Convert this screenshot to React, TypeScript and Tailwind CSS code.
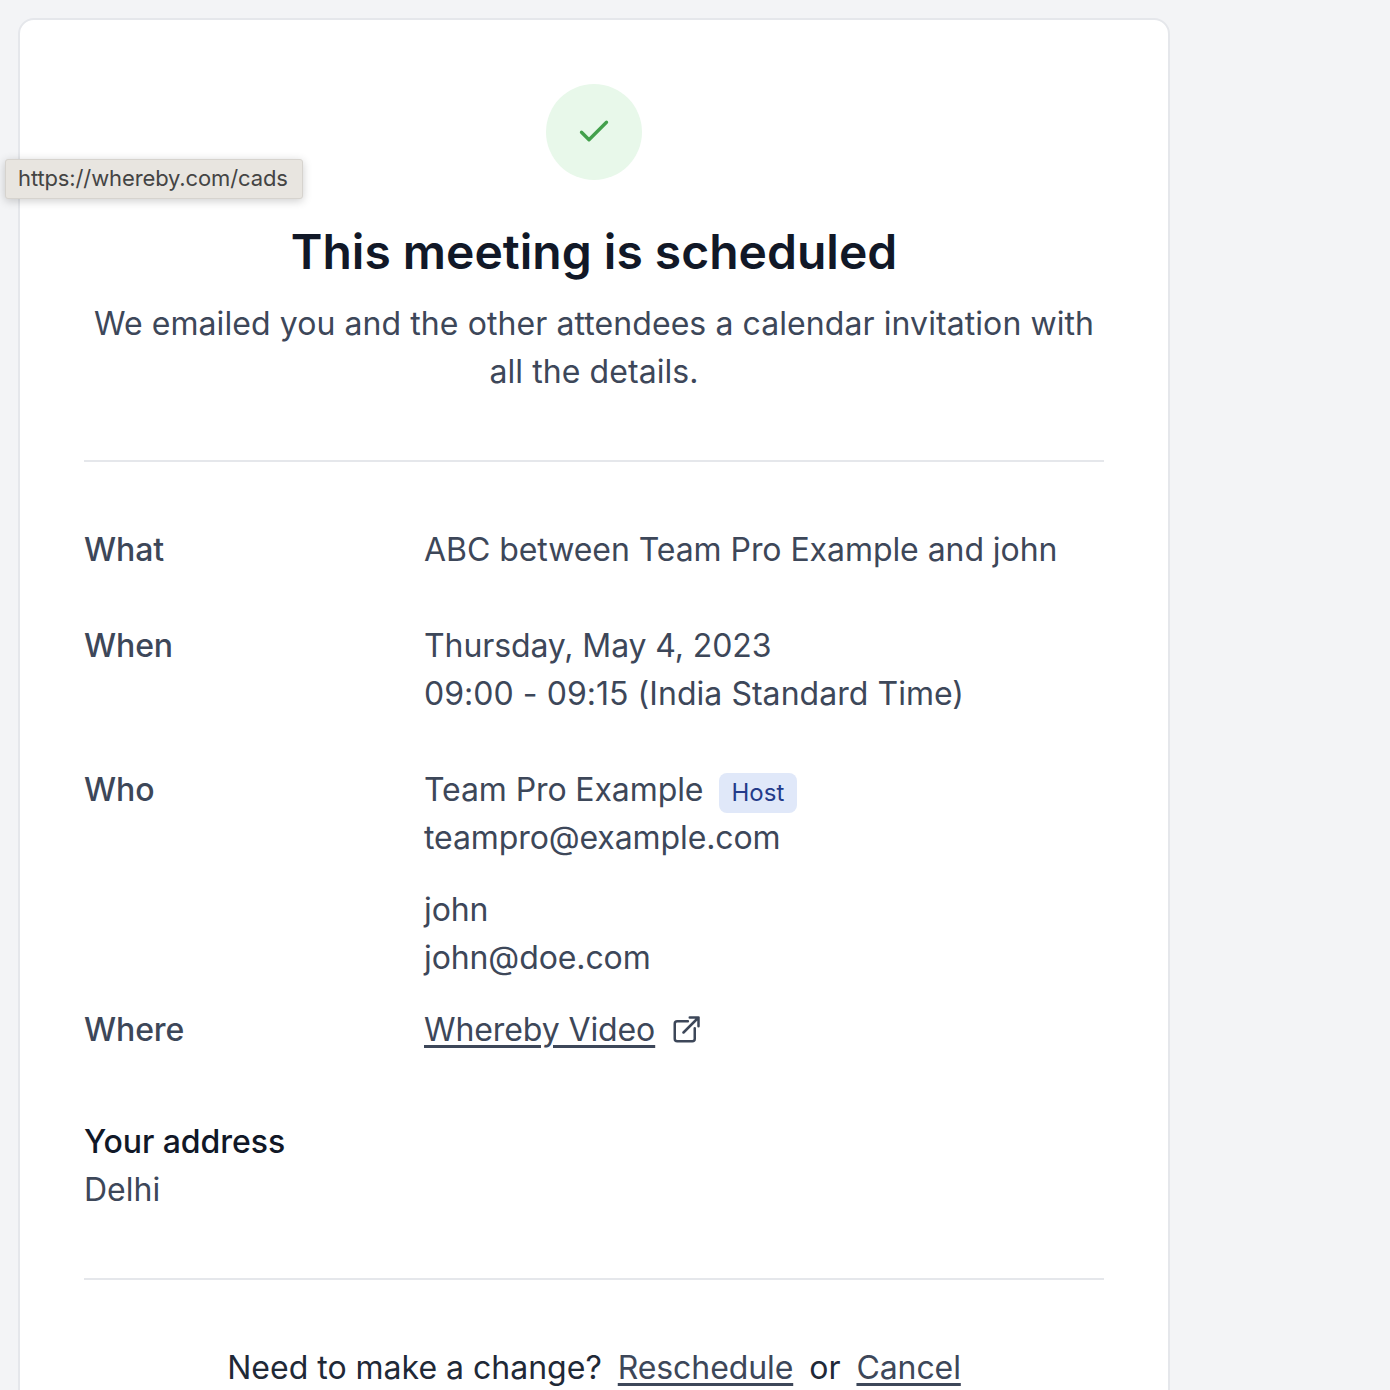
export default function App() {
  const Label = ({ children }: { children: React.ReactNode }) => (
    <div className="font-medium tracking-[-0.1px] text-[#3d4759]">{children}</div>
  );
  return (
    <div className="relative h-[1390px] overflow-hidden bg-[#f3f4f6] font-['Inter',sans-serif] text-[32px] leading-[48px] text-[#3d4759]">
      <div className="ml-[18px] mt-[18px] w-[1152px] rounded-2xl border-2 border-[#e5e7eb] bg-white p-16">
        <div className="flex h-24 w-24 mx-auto items-center justify-center rounded-full bg-[#e8f8ea]">
          <svg className="mt-[-2px]" width="40" height="40" viewBox="0 0 24 24" fill="none" stroke="#43a04c" strokeWidth="2" strokeLinecap="round" strokeLinejoin="round">
            <path d="M4.5 12.75l4.5 4.5 10.5-10.5" />
          </svg>
        </div>
        <h1 className="mt-11 text-center text-5xl leading-[56px] font-semibold text-[#111827]">This meeting is scheduled</h1>
        <p className="mt-5 text-center tracking-[0.08px]">We emailed you and the other attendees a calendar invitation with all the details.</p>
        <div className="mt-[64px] h-0.5 bg-[#e5e7eb]" />
        <div className="mt-16 grid grid-cols-3 gap-y-12 tracking-[-0.1px]">
          <Label>What</Label>
          <div className="col-span-2 tracking-[-0.06px]">ABC between Team Pro Example and john</div>
          <Label>When</Label>
          <div className="col-span-2">
            <div>Thursday, May 4, 2023</div>
            <div className="tracking-[0.04px]">09:00 - 09:15 (India Standard Time)</div>
          </div>
          <Label>Who</Label>
          <div className="col-span-2 mb-[-24px]">
            <div className="flex items-center">
              Team Pro Example
              <span className="ml-4 mt-[6px] h-10 rounded-lg bg-[#e0e8f9] px-3 text-2xl leading-10 font-normal tracking-[0.1px] text-[#243b8a]">Host</span>
            </div>
            <div>teampro@example.com</div>
            <div className="mt-6">john</div>
            <div>john@doe.com</div>
          </div>
          <Label>Where</Label>
          <div className="col-span-2 flex items-center">
            <a className="underline underline-offset-4">Whereby Video</a>
            <svg className="ml-4" width="30" height="30" viewBox="0 0 24 24" fill="none" stroke="#3d4759" strokeWidth="2" strokeLinecap="round" strokeLinejoin="round">
              <path d="M13.5 5H5a2 2 0 0 0-2 2v12a2 2 0 0 0 2 2h12a2 2 0 0 0 2-2v-8.5" />
              <path d="M10 14 22 2M15 2h7v7" />
            </svg>
          </div>
        </div>
        <div className="mt-16">
          <div className="font-medium tracking-[-0.05px] text-[#111827]">Your address</div>
          <div>Delhi</div>
        </div>
        <div className="mt-16 h-0.5 bg-[#e5e7eb]" />
        <div className="mt-16 text-center text-[#1f2937]">
          Need to make a change?
          <a className="ml-4 underline underline-offset-4 tracking-[-0.1px] text-[#3d4759]">Reschedule</a>
          <span className="mx-4">or</span>
          <a className="underline underline-offset-4 tracking-[-0.1px] text-[#3d4759]">Cancel</a>
        </div>
      </div>
      <div className="absolute left-[5px] top-[159px] h-10 w-[298px] rounded-[3px] border border-[#d6d3ce] bg-[#e8e5e0] px-3 text-[22px] leading-[37px] tracking-[-0.12px] text-[#444] shadow-[0_2px_10px_rgba(0,0,0,0.2)]">
        https://whereby.com/cads
      </div>
    </div>
  );
}
